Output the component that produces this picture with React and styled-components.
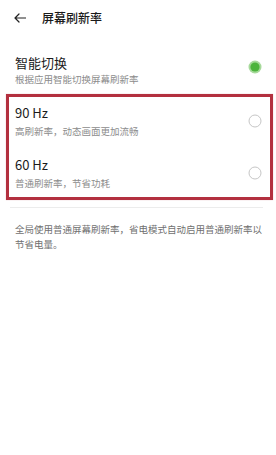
import React from 'react';
import styled, { createGlobalStyle } from 'styled-components';

const GlobalStyle = createGlobalStyle`
    html, body {
        margin: 0;
        padding: 0;
        background: #ffffff;
    }
    body {
        font-family: "Noto Sans CJK SC", "Noto Sans", sans-serif;
        color: #1b1b1b;
    }
`;

const Page = styled.div`
    width: 276px;
    min-height: 455px;
    background: #ffffff;
`;

const Header = styled.div`
    display: flex;
    align-items: center;
    height: 36px;
    padding-left: 14px;
`;

const BackIcon = styled.svg`
    width: 12px;
    height: 10px;
    margin-right: 16px;
`;

const HeaderTitle = styled.div`
    font-size: 12px;
    font-weight: 500;
    color: #1a1a1a;
    line-height: 16px;
`;

const SmartRow = styled.div`
    display: flex;
    align-items: flex-start;
    justify-content: space-between;
    padding: 18px 14px 8px 15px;
`;

const TextBlock = styled.div`
    display: flex;
    flex-direction: column;
`;

const Title = styled.div`
    font-size: 13px;
    line-height: 18px;
    color: #1b1b1b;
`;

const Sub = styled.div`
    font-size: 9.5px;
    line-height: 14px;
    color: #8c8c8c;
    margin-top: ${p => p.$gap || 0}px;
`;

const HighlightBox = styled.div`
    margin: 0 3px 0 6px;
    border: 3px solid #b3303f;
    box-shadow: 0 0 1px rgba(179, 48, 63, 0.35);
    display: flex;
    flex-direction: column;
    gap: 4px;
`;

const OptionRow = styled.div`
    display: flex;
    align-items: center;
    justify-content: space-between;
    padding: 7px 8px 7px 6px;
`;

const RadioWrap = styled.svg`
    width: 14px;
    height: 14px;
    flex-shrink: 0;
    margin-top: ${p => p.$offset || 0}px;
`;

const Divider = styled.div`
    height: 1px;
    background: #ececec;
    margin: 7px 13px 0 10px;
`;

const Footer = styled.div`
    font-size: 9.5px;
    line-height: 15px;
    color: #707070;
    padding: 14px 12px 0 15px;
`;

const Radio = ({ checked, offset }) => (
    <RadioWrap viewBox="0 0 14 14" $offset={offset}>
        {checked ? (
            <>
                <circle cx="7" cy="7" r="6.5" fill="#a6d99a" />
                <circle cx="7" cy="7" r="4.6" fill="#4cb43c" />
            </>
        ) : (
            <circle cx="7" cy="7" r="6" fill="none" stroke="#c6c6c6" strokeWidth="1" />
        )}
    </RadioWrap>
);

const options = [
    { title: '90 Hz', desc: '高刷新率，动态画面更加流畅' },
    { title: '60 Hz', desc: '普通刷新率，节省功耗' },
];

const App = () => (
    <Page>
        <GlobalStyle />
        <Header>
            <BackIcon viewBox="0 0 12 10">
                <path d="M11.5 5 H1 M5 1 L1 5 L5 9" fill="none" stroke="#222" strokeWidth="1.2" strokeLinecap="round" strokeLinejoin="round" />
            </BackIcon>
            <HeaderTitle>屏幕刷新率</HeaderTitle>
        </Header>
        <SmartRow>
            <TextBlock>
                <Title>智能切换</Title>
                <Sub>根据应用智能切换屏幕刷新率</Sub>
            </TextBlock>
            <Radio checked offset={6} />
        </SmartRow>
        <HighlightBox>
            {options.map(item => (
                <OptionRow key={item.title}>
                    <TextBlock>
                        <Title>{item.title}</Title>
                        <Sub $gap={2}>{item.desc}</Sub>
                    </TextBlock>
                    <Radio />
                </OptionRow>
            ))}
        </HighlightBox>
        <Divider />
        <Footer>全局使用普通屏幕刷新率，省电模式自动启用普通刷新率以节省电量。</Footer>
    </Page>
);

export default App;
